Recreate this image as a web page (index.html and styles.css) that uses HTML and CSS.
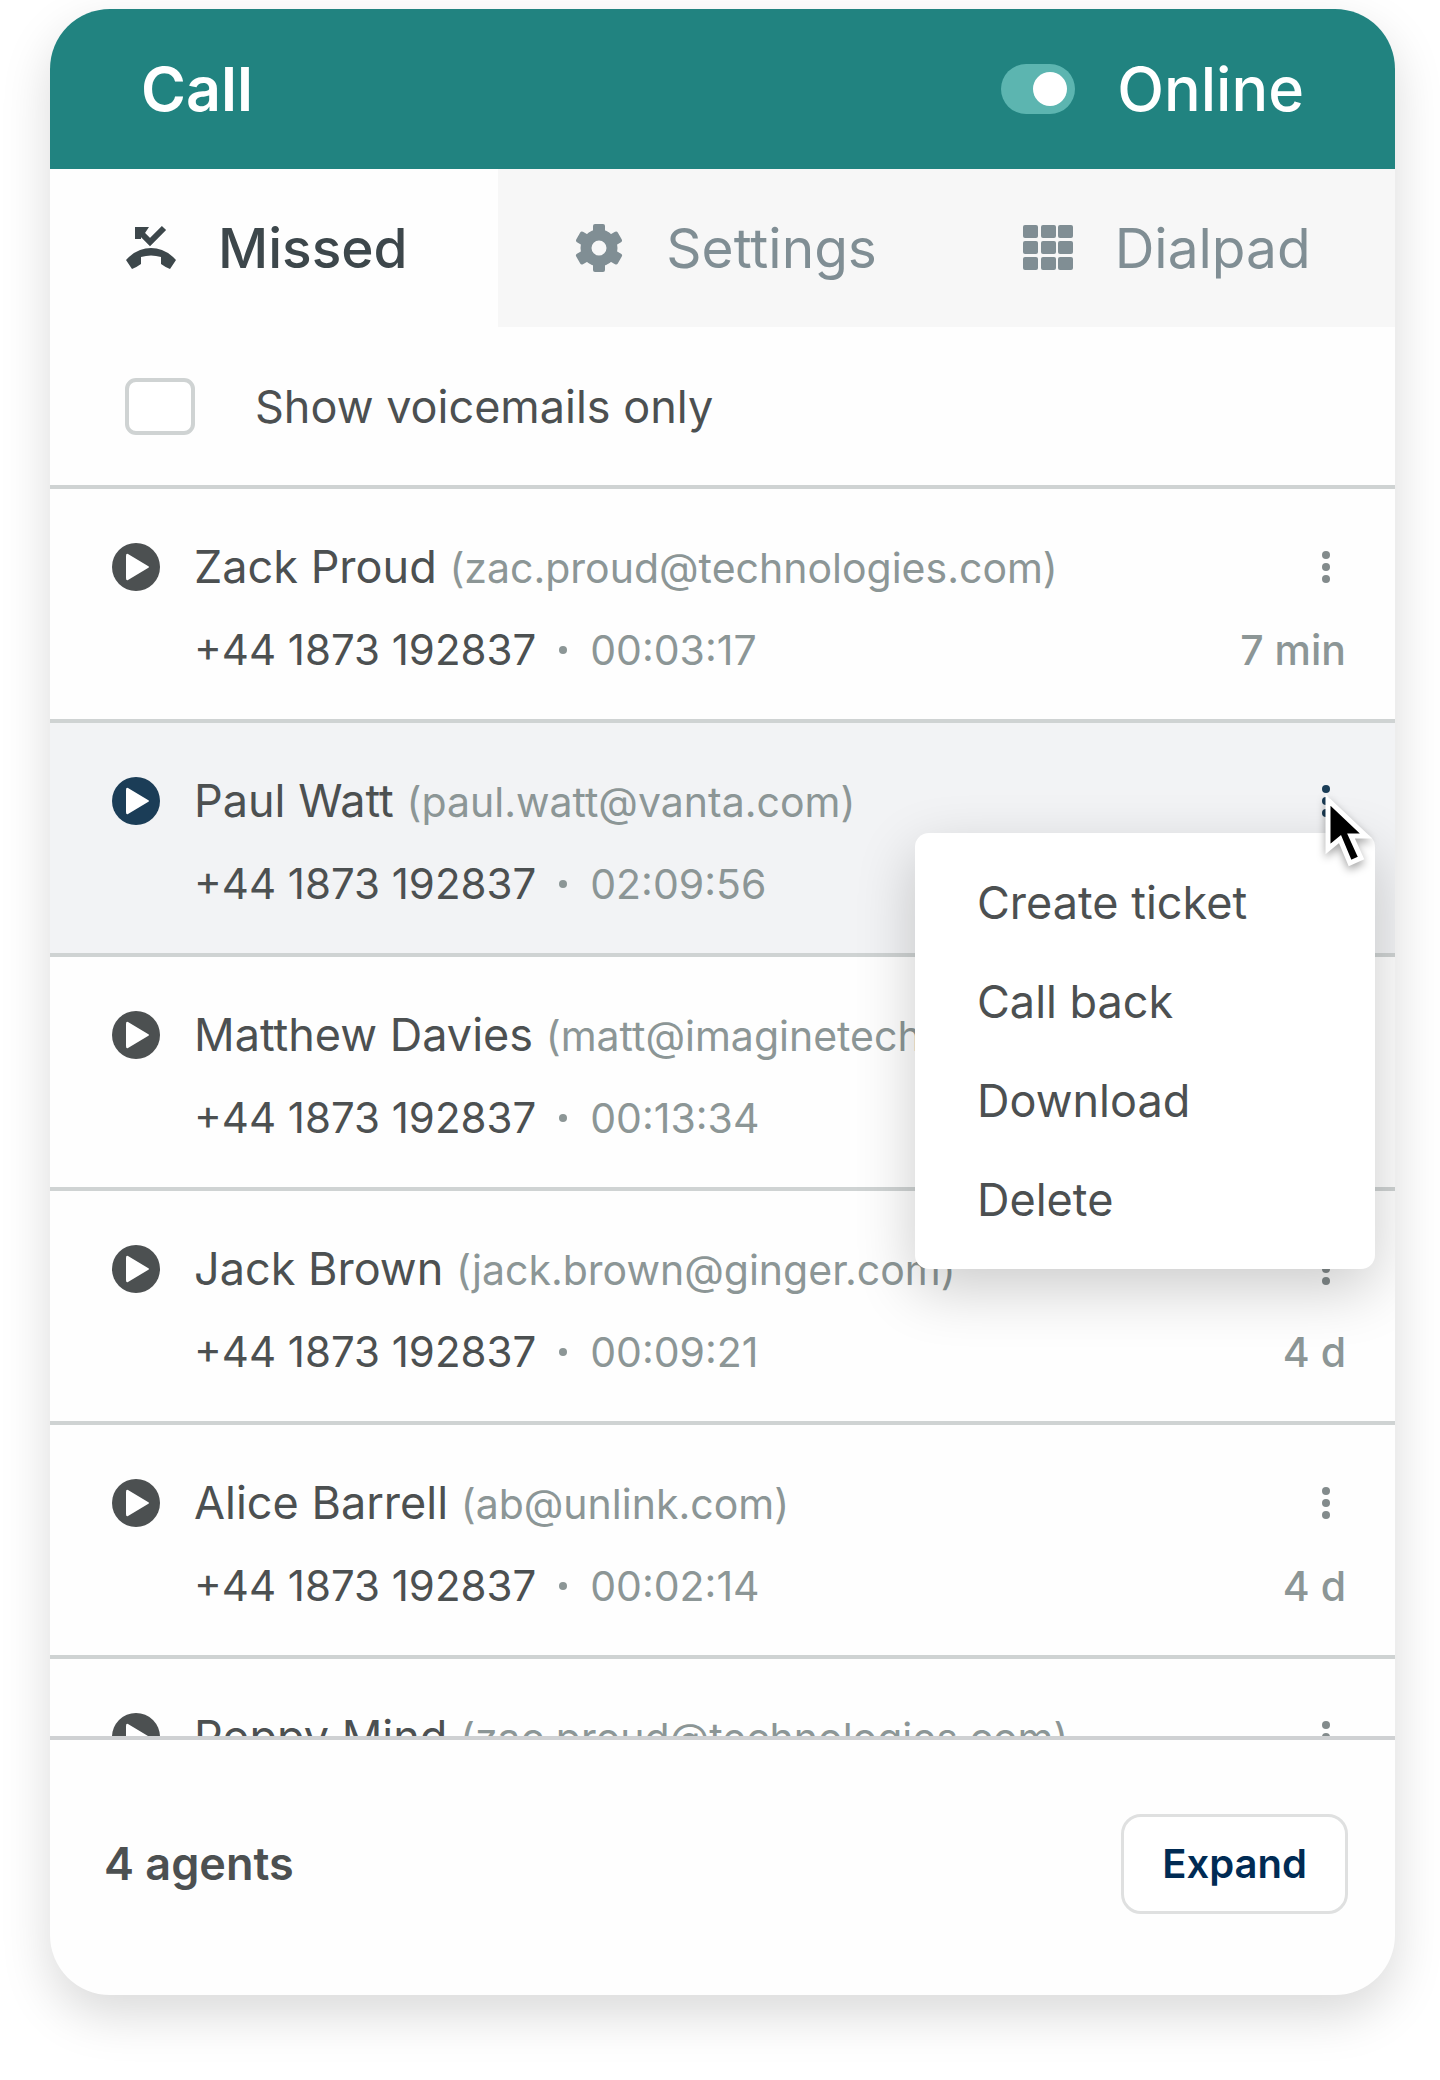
FILE: index.html
```html
<!DOCTYPE html>
<html lang="en">
  <head>
    <meta charset="UTF-8" />
    <meta name="viewport" content="width=device-width, initial-scale=1.0" />
    <title>Call</title>
    <link rel="stylesheet" href="styles.css">
  </head>
  <body>
    <!-- shared icons -->
    <svg class="sprite" aria-hidden="true">
      <symbol id="play" viewBox="0 0 48 48">
        <circle cx="24" cy="24" r="24" fill="currentColor" />
        <path d="M14 13v22q0 3 2 2l20-12q2-1 0-2l-20-12q-2-1 -2 2z" fill="#fff" />
      </symbol>
      <symbol id="dots" viewBox="0 0 10 34">
        <circle cx="5" cy="5" r="4" fill="currentColor" />
        <circle cx="5" cy="17" r="4" fill="currentColor" />
        <circle cx="5" cy="29" r="4" fill="currentColor" />
      </symbol>
    </svg>

    <main class="card">
      <header class="header">
        <h1>Call</h1>
        <label class="status">
          <input type="checkbox" class="toggle" checked />
          Online
        </label>
      </header>

      <nav class="tabs">
        <button class="tab valgt">
          <svg width="50" height="50" viewBox="0 0 50 50">
            <path d="M38 5L24 19L14 9" fill="none" stroke="currentColor" stroke-width="6" />
            <path d="M9 4H23L19 10L15 12V16H9Z" fill="currentColor" />
            <path d="M0 37Q11 25 25 25T50 37L44 46Q39 44 35 41V34Q25 31 15 34V41Q11 44 6 46Z" fill="currentColor" />
          </svg>
          Missed
        </button>
        <button class="tab">
          <svg width="50" height="50" viewBox="0 0 50 50">
            <circle cx="25" cy="25" r="13" fill="none" stroke="currentColor" stroke-width="11" />
            <g fill="currentColor">
              <rect x="19" y="1" width="12" height="12" rx="2" />
              <rect x="19" y="1" width="12" height="12" rx="2" transform="rotate(60 25 25)" />
              <rect x="19" y="1" width="12" height="12" rx="2" transform="rotate(120 25 25)" />
              <rect x="19" y="1" width="12" height="12" rx="2" transform="rotate(180 25 25)" />
              <rect x="19" y="1" width="12" height="12" rx="2" transform="rotate(240 25 25)" />
              <rect x="19" y="1" width="12" height="12" rx="2" transform="rotate(300 25 25)" />
            </g>
          </svg>
          Settings
        </button>
        <button class="tab">
          <svg width="50" height="50" viewBox="0 0 50 50" fill="currentColor">
            <rect x="0" y="2" width="15" height="13" rx="2" />
            <rect x="18" y="2" width="15" height="13" rx="2" />
            <rect x="35" y="2" width="15" height="13" rx="2" />
            <rect x="0" y="18" width="15" height="13" rx="2" />
            <rect x="18" y="18" width="15" height="13" rx="2" />
            <rect x="35" y="18" width="15" height="13" rx="2" />
            <rect x="0" y="34" width="15" height="13" rx="2" />
            <rect x="18" y="34" width="15" height="13" rx="2" />
            <rect x="35" y="34" width="15" height="13" rx="2" />
          </svg>
          Dialpad
        </button>
      </nav>

      <label class="filter">
        <input type="checkbox" class="box" />
        Show voicemails only
      </label>

      <section class="calls">
        <article class="call">
          <button class="play" aria-label="Play"><svg><use href="#play" /></svg></button>
          <p class="who">Zack Proud <span class="mail">(zac.proud@technologies.com)</span></p>
          <button class="more" aria-label="More"><svg><use href="#dots" /></svg></button>
          <p class="number">+44 1873 192837 <i class="dot"></i> <span>00:03:17</span></p>
          <time>7 min</time>
        </article>

        <article class="call active">
          <button class="play" aria-label="Play"><svg><use href="#play" /></svg></button>
          <p class="who">Paul Watt <span class="mail">(paul.watt@vanta.com)</span></p>
          <button class="more" aria-label="More"><svg><use href="#dots" /></svg></button>
          <p class="number">+44 1873 192837 <i class="dot"></i> <span>02:09:56</span></p>

          <div class="menu">
            <button>Create ticket</button>
            <button>Call back</button>
            <button>Download</button>
            <button>Delete</button>
          </div>
          <svg class="cursor" viewBox="0 0 48 74">
            <path d="M3 5V54L15 44L25 68L36 63L26 41H41Z" fill="#000" stroke="#fff" stroke-width="5" />
          </svg>
        </article>

        <article class="call">
          <button class="play" aria-label="Play"><svg><use href="#play" /></svg></button>
          <p class="who">Matthew Davies <span class="mail">(matt@imaginetech.com)</span></p>
          <button class="more" aria-label="More"><svg><use href="#dots" /></svg></button>
          <p class="number">+44 1873 192837 <i class="dot"></i> <span>00:13:34</span></p>
        </article>

        <article class="call">
          <button class="play" aria-label="Play"><svg><use href="#play" /></svg></button>
          <p class="who">Jack Brown <span class="mail">(jack.brown@ginger.com)</span></p>
          <button class="more" aria-label="More"><svg><use href="#dots" /></svg></button>
          <p class="number">+44 1873 192837 <i class="dot"></i> <span>00:09:21</span></p>
          <time>4 d</time>
        </article>

        <article class="call">
          <button class="play" aria-label="Play"><svg><use href="#play" /></svg></button>
          <p class="who">Alice Barrell <span class="mail">(ab@unlink.com)</span></p>
          <button class="more" aria-label="More"><svg><use href="#dots" /></svg></button>
          <p class="number">+44 1873 192837 <i class="dot"></i> <span>00:02:14</span></p>
          <time>4 d</time>
        </article>

        <article class="call">
          <button class="play" aria-label="Play"><svg><use href="#play" /></svg></button>
          <p class="who">Poppy Mind <span class="mail">(zac.proud@technologies.com)</span></p>
          <button class="more" aria-label="More"><svg><use href="#dots" /></svg></button>
        </article>
      </section>

      <footer class="footer">
        <p>4 agents</p>
        <button class="expand">Expand</button>
      </footer>
    </main>
  </body>
</html>
```
FILE: styles.css
```css
* {
  box-sizing: border-box;
}

body {
  margin: 0;
  padding: 9px 45px 85px 50px;
  background-color: #fff;
  font-family: Inter, "Liberation Sans", sans-serif;
  font-size: 45px;
  color: #4c5051;
}

h1,
p {
  margin: 0;
}

button {
  padding: 0;
  border: none;
  background: none;
  font: inherit;
  color: inherit;
}

.sprite {
  display: none;
}

.card {
  border-radius: 60px;
  background-color: #fefefe;
  box-shadow: 0 20px 50px rgba(0, 0, 0, 0.15);
  overflow: hidden;
}

/* header */

.header {
  display: flex;
  justify-content: space-between;
  align-items: center;
  height: 160px;
  padding: 0 91px;
  background-color: #218380;
  color: #fff;
  font-size: 61px;
  font-weight: 500;
}

.header h1 {
  font-size: 61px;
  font-weight: 600;
}

.status {
  display: flex;
  align-items: center;
  gap: 42px;
}

.toggle {
  appearance: none;
  display: flex;
  justify-content: flex-end;
  align-items: center;
  width: 74px;
  height: 50px;
  margin: 0;
  padding: 8px;
  border-radius: 25px;
  background-color: #5cb5b0;
}

.toggle::before {
  content: "";
  width: 34px;
  height: 34px;
  border-radius: 50%;
  background-color: #fff;
}

/* tabs */

.tabs {
  display: flex;
}

.tab {
  display: flex;
  flex: 1;
  align-items: center;
  gap: 42px;
  height: 158px;
  padding-left: 76px;
  background-color: #f7f7f7;
  color: #808e94;
  font-size: 55px;
}

.tab.valgt {
  background-color: #fefefe;
  color: #3d474b;
  font-weight: 500;
}

.filter {
  display: flex;
  align-items: center;
  gap: 60px;
  height: 162px;
  padding-left: 75px;
  border-bottom: 4px solid #cfd3d3;
}

.box {
  appearance: none;
  width: 70px;
  height: 57px;
  margin: 0;
  border: 4px solid #cfd3d3;
  border-radius: 11px;
  background-color: #fff;
}

/* call list */

.calls {
  height: 1247px;
  overflow: hidden;
}

.call {
  position: relative;
  display: grid;
  grid-template-columns: 48px 1fr auto;
  grid-template-rows: 60px 60px;
  row-gap: 23px;
  column-gap: 34px;
  height: 234px;
  padding: 48px 49px 0 62px;
  border-bottom: 4px solid #cfd3d3;
  line-height: 60px;
}

.call.active {
  background-color: #f2f3f5;
}

.play,
.more {
  display: flex;
  align-items: center;
  justify-content: flex-end;
}

.play svg {
  width: 48px;
  height: 48px;
}

.more {
  padding-right: 15px;
  color: #838b8c;
}

.more svg {
  width: 10px;
  height: 34px;
}

.active .play,
.active .more {
  color: #1b3d57;
}

.who {
  white-space: nowrap;
}

.mail {
  font-size: 41px;
  color: #8c9696;
}

.number {
  display: flex;
  align-items: center;
  gap: 23px;
  grid-column: 2;
  font-size: 42px;
}

.number span,
.call time {
  font-size: 41px;
  color: #8c9696;
}

.call time {
  font-weight: 500;
}

.dot {
  width: 8px;
  height: 8px;
  border-radius: 50%;
  background-color: #8c9696;
}

/* popup menu */

.menu {
  position: absolute;
  z-index: 2;
  top: 110px;
  right: 20px;
  display: flex;
  flex-direction: column;
  width: 460px;
  padding: 20px 0;
  border-radius: 14px;
  background-color: #fff;
  box-shadow: 0 20px 60px rgba(0, 0, 0, 0.2);
}

.menu button {
  height: 99px;
  padding-left: 62px;
  text-align: left;
}

.cursor {
  position: absolute;
  z-index: 3;
  top: 72px;
  right: 22px;
  width: 48px;
  height: 74px;
  filter: drop-shadow(0 4px 4px rgba(0, 0, 0, 0.35));
  overflow: visible;
}

/* footer */

.footer {
  display: flex;
  justify-content: space-between;
  align-items: center;
  height: 259px;
  padding: 0 47px 8px 54px;
  border-top: 4px solid #cfd1d3;
  font-weight: 600;
}

.expand {
  height: 100px;
  padding: 0 38px;
  border: 3px solid #dfe0e0;
  border-radius: 20px;
  background-color: #fff;
  font-size: 40px;
  color: #002b54;
}
```
